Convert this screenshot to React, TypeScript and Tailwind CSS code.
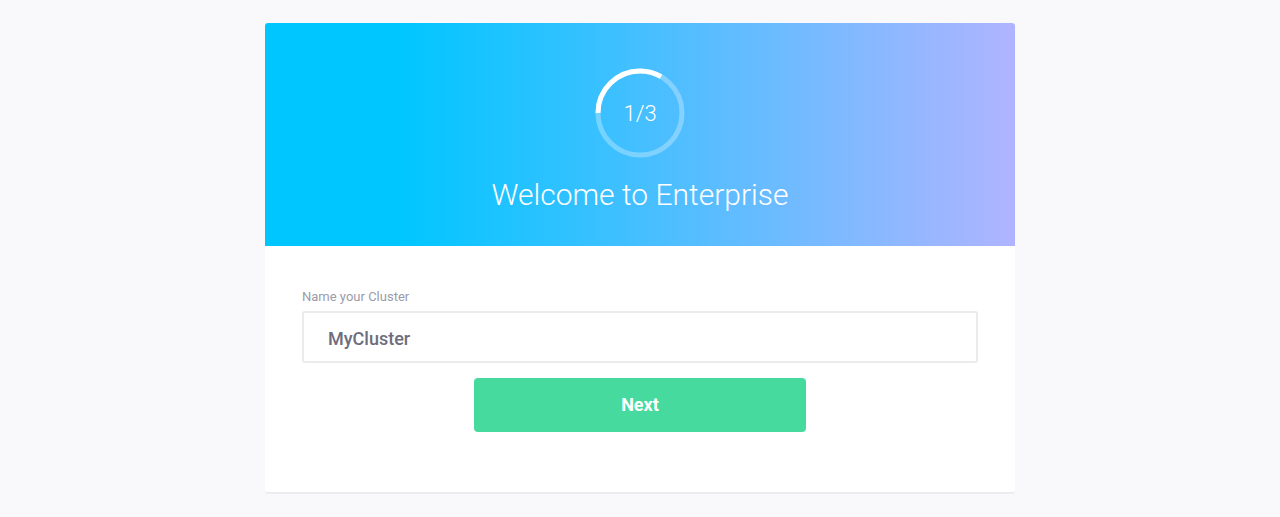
import React from "react";

const ProgressRing = ({ step, total }: { step: number; total: number }) => {
  const r = 42;
  const c = 2 * Math.PI * r;
  const done = (step / total) * c;
  return (
    <div className="relative w-[90px] h-[90px]">
      <svg width="90" height="90" viewBox="0 0 90 90" className="absolute inset-0">
        <circle cx="45" cy="45" r={r} fill="none" stroke="rgba(255,255,255,0.3)" strokeWidth="5" />
        <circle
          cx="45"
          cy="45"
          r={r}
          fill="none"
          stroke="#ffffff"
          strokeWidth="5"
          strokeDasharray={`${done} ${c}`}
          transform="rotate(180 45 45)"
        />
      </svg>
      <div className="absolute inset-0 flex items-center justify-center text-[22px] font-light text-white">
        {step}/{total}
      </div>
    </div>
  );
};

export default function App() {
  return (
    <div className="min-h-[517px] w-full bg-[#f9f9fb] font-['Roboto',sans-serif] flex justify-center pt-[23px]">
      <div className="w-[750px] h-[471px] bg-white rounded-[3px] border-b-2 border-[#ececef] flex flex-col">
        <div className="h-[223px] rounded-t-[3px] bg-[linear-gradient(to_right,#00c6ff_18%,#b0b4ff_100%)] flex flex-col items-center pt-[45px]">
          <ProgressRing step={1} total={3} />
          <h1 className="mt-[19px] text-[30px] leading-[36px] font-light text-white">Welcome to Enterprise</h1>
        </div>
        <div className="px-[37px] pt-[42px] flex flex-col">
          <label className="text-[13px] leading-[17px] text-[#9b9bab]">Name your Cluster</label>
          <input
            defaultValue="MyCluster"
            className="mt-[6px] h-[52px] w-full rounded-[3px] border-2 border-[#ebebee] px-[24px] pt-[2px] text-[18px] font-medium text-[#6d6d7d] outline-none"
          />
          <div className="flex justify-center mt-[15px]">
            <button className="w-[332px] h-[54px] rounded-[4px] bg-[#46da9f] text-white text-[18px] font-bold pb-[2px]">
              Next
            </button>
          </div>
        </div>
      </div>
    </div>
  );
}
